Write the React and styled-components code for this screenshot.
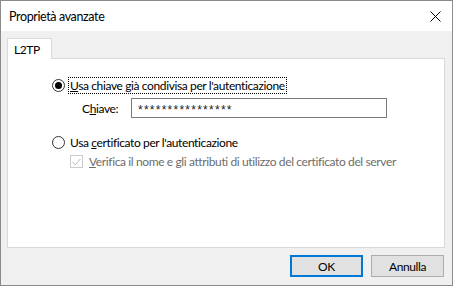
import styled, { createGlobalStyle } from 'styled-components'

const GlobalStyle = createGlobalStyle`
  html, body {
    margin: 0;
    padding: 0;
    background: #ffffff;
  }
  * {
    box-sizing: border-box;
  }
`

const Window = styled.div`
  width: 453px;
  height: 286px;
  border: 1px solid #8a8a8a;
  display: flex;
  flex-direction: column;
  font-family: Lato, 'Liberation Sans', sans-serif;
  font-size: 12px;
  letter-spacing: -0.38px;
  color: #000;
  background: #f0f0f0;
  overflow: hidden;
`

const TitleBar = styled.div`
  height: 30px;
  background: #fff;
  display: flex;
  align-items: center;
  justify-content: space-between;
  padding: 0 10px 0 8px;
  flex-shrink: 0;
`

const Title = styled.span`
  font-size: 12.5px;
  color: #000;
`

const CloseIcon = styled.svg`
  width: 11px;
  height: 11px;
  margin-right: 1px;
`

const Body = styled.div`
  flex: 1;
  display: flex;
  flex-direction: column;
  padding: 7px 7px 8px 6px;
`

const TabStrip = styled.div`
  display: flex;
  height: 20px;
  position: relative;
  z-index: 1;
`

const Tab = styled.div`
  width: 45px;
  height: 21px;
  background: #fff;
  border: 1px solid #d9d9d9;
  border-bottom: none;
  padding: 3px 0 0 6px;
`

const Panel = styled.div`
  height: 190px;
  background: #fff;
  border: 1px solid #d9d9d9;
  padding: 18px 0 0 44px;
  display: flex;
  flex-direction: column;
`

const Option = styled.label`
  display: flex;
  align-items: center;
  height: 17px;
  margin-top: ${(p) => p.$top || 0}px;
  margin-left: ${(p) => p.$indent || 0}px;
  color: ${(p) => (p.$disabled ? '#6d6d6d' : '#000')};
`

const Radio = styled.span`
  width: 13px;
  height: 13px;
  border-radius: 50%;
  border: 1px solid #333;
  display: flex;
  align-items: center;
  justify-content: center;
  margin-right: 3px;
  flex-shrink: 0;
  &::after {
    content: '';
    display: ${(p) => (p.$checked ? 'block' : 'none')};
    width: 7px;
    height: 7px;
    border-radius: 50%;
    background: #000;
  }
`

const Check = styled.span`
  width: 13px;
  height: 13px;
  border: 1px solid #cccccc;
  display: flex;
  align-items: center;
  justify-content: center;
  margin-right: 4px;
  flex-shrink: 0;
`

const OptionText = styled.span`
  padding: 0 1px;
  border: 1px dotted ${(p) => (p.$focus ? '#000' : 'transparent')};
  line-height: 15px;
  white-space: nowrap;
`

const Key = styled.u`
  text-decoration: underline;
`

const KeyRow = styled.div`
  display: flex;
  align-items: center;
  margin: 4px 0 0 30px;
`

const KeyLabel = styled.span`
  width: 49px;
`

const KeyInput = styled.div`
  width: 256px;
  height: 20px;
  border: 1px solid #7a7a7a;
  padding: 3px 0 0 6px;
  display: flex;
  align-items: center;
  font-family: 'Liberation Sans', sans-serif;
  font-size: 12px;
  letter-spacing: 1.25px;
  color: #1a1a1a;
`

const ButtonRow = styled.div`
  display: flex;
  justify-content: flex-end;
  gap: 8px;
  margin-top: 7px;
  padding-right: 1px;
`

const Button = styled.button`
  width: 73px;
  height: 22px;
  background: #e1e1e1;
  border: ${(p) => (p.$default ? '2px solid #0078d7' : '1px solid #adadad')};
  font-family: inherit;
  font-size: 12px;
  letter-spacing: inherit;
  color: #000;
  padding: 0;
`

export default function App() {
  return (
    <>
      <GlobalStyle />
      <Window>
        <TitleBar>
          <Title>Proprietà avanzate</Title>
          <CloseIcon viewBox="0 0 11 11">
            <path d="M0.5 0.5 L10.5 10.5 M10.5 0.5 L0.5 10.5" stroke="#000" strokeWidth="1" />
          </CloseIcon>
        </TitleBar>
        <Body>
          <TabStrip>
            <Tab>L2TP</Tab>
          </TabStrip>
          <Panel>
            <Option>
              <Radio $checked />
              <OptionText $focus>
                <Key>U</Key>sa chiave già condivisa per l'autenticazione
              </OptionText>
            </Option>
            <KeyRow>
              <KeyLabel>
                C<Key>h</Key>iave:
              </KeyLabel>
              <KeyInput>****************</KeyInput>
            </KeyRow>
            <Option $top={16}>
              <Radio />
              <OptionText>
                Usa <Key>c</Key>ertificato per l'autenticazione
              </OptionText>
            </Option>
            <Option $top={2} $indent={18} $disabled>
              <Check>
                <svg width="9" height="8" viewBox="0 0 9 8">
                  <path d="M0.5 4 L3.3 6.8 L8.5 0.8" stroke="#b8b8b8" strokeWidth="1" fill="none" />
                </svg>
              </Check>
              <OptionText>
                <Key>V</Key>erifica il nome e gli attributi di utilizzo del certificato del server
              </OptionText>
            </Option>
          </Panel>
          <ButtonRow>
            <Button $default>OK</Button>
            <Button>Annulla</Button>
          </ButtonRow>
        </Body>
      </Window>
    </>
  )
}
